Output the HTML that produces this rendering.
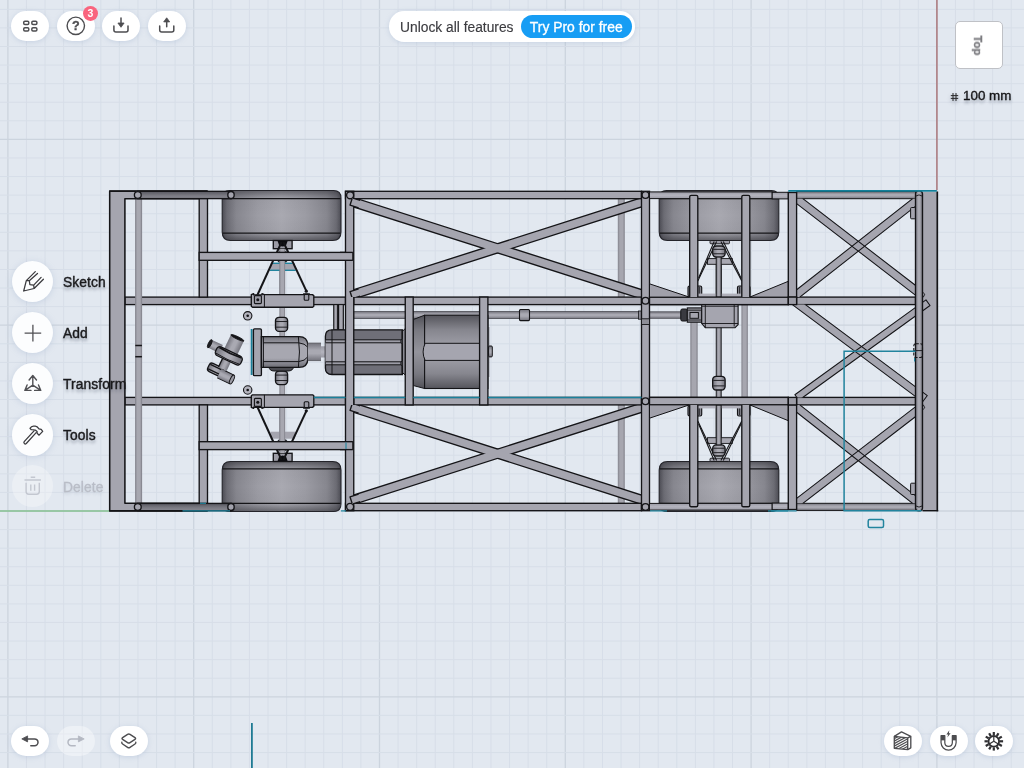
<!DOCTYPE html>
<html><head><meta charset="utf-8"><title>CAD</title>
<style>
html,body{margin:0;padding:0;}
body{width:1024px;height:768px;overflow:hidden;background:#e2e8f0;font-family:"Liberation Sans",sans-serif;}
#app{position:relative;width:1024px;height:768px;overflow:hidden;background:#e2e8f0;}
#grid,#draw{position:absolute;left:0;top:0;}
.gm{stroke:#d7dee8;stroke-width:1;}
.gM{stroke:#ccd4de;stroke-width:1.3;}
.pill{position:absolute;width:38px;height:30px;border-radius:15px;background:#fff;box-shadow:0 1px 5px rgba(150,170,200,0.35);}
.pill.dis{background:rgba(255,255,255,0.38);box-shadow:none;}
.pill svg{will-change:transform;position:absolute;left:0;top:0;}
.circ{position:absolute;width:41.5px;height:41.5px;border-radius:21px;background:#fcfdfe;box-shadow:0 1px 6px rgba(150,170,200,0.35);}
.circ.dis{background:rgba(255,255,255,0.3);box-shadow:none;}
.circ svg{position:absolute;left:0;top:0;}
.lbl{position:absolute;will-change:transform;font-size:13.8px;line-height:16px;color:#1a1a1c;text-shadow:0 2.5px 3px rgba(40,50,70,0.4);-webkit-text-stroke:0.4px #1a1a1c;white-space:nowrap;letter-spacing:0.1px;margin-top:1px;}
.lbl.dis{color:#b9bdc7;-webkit-text-stroke:0.3px #b9bdc7;text-shadow:0 2px 3px rgba(120,130,150,0.25);}
.badge{position:absolute;will-change:transform;left:83.4px;top:5.8px;width:14.8px;height:14.8px;border-radius:7.4px;background:#f9647e;color:#fff;font-weight:bold;font-size:10.5px;line-height:14.8px;text-align:center;}
.banner{position:absolute;left:388.6px;top:11.2px;width:246.2px;height:30.4px;border-radius:15.2px;background:#fff;box-shadow:0 1px 5px rgba(150,170,200,0.35);}
.banner .bt{position:absolute;will-change:transform;left:11.6px;top:9.2px;font-size:13.8px;line-height:16px;color:#3c3c40;white-space:nowrap;-webkit-text-stroke:0.15px #3c3c40;}
.banner .bb{position:absolute;left:132.5px;top:3.7px;width:110.5px;height:23.6px;border-radius:11.8px;background:#179df4;}
.banner .bb span{position:absolute;will-change:transform;left:0;width:100%;top:4px;text-align:center;font-size:13.9px;line-height:16px;color:#fff;white-space:nowrap;-webkit-text-stroke:0.3px #fff;}
.cube{position:absolute;box-sizing:border-box;left:954.6px;top:21.3px;width:48px;height:48.2px;border-radius:5px;background:#fff;border:0.6px solid #bfc1c6;}
.cube span{will-change:transform;position:absolute;left:50%;top:50%;font-size:11.4px;font-weight:bold;color:#7c7c80;-webkit-text-stroke:0.3px #7c7c80;line-height:12px;transform:translate(-50%,-50%) rotate(90deg) translate(0.5px,1px);}
.scale{position:absolute;left:950.6px;top:88px;height:16px;white-space:nowrap;}
.scale svg{position:absolute;left:-0.8px;top:3.6px;filter:drop-shadow(0 2px 2px rgba(40,50,70,0.35));}
.scale span{position:absolute;will-change:transform;left:12.4px;top:0;font-size:13.4px;line-height:16px;color:#161618;-webkit-text-stroke:0.35px #161618;text-shadow:0 2.5px 3px rgba(40,50,70,0.4);}

</style></head>
<body>
<div id="app">
<svg id="grid" width="1024" height="768" viewBox="0 0 1024 768">
<line x1="7.90" y1="0" x2="7.90" y2="768" class="gM"/>
<line x1="26.48" y1="0" x2="26.48" y2="768" class="gm"/>
<line x1="45.06" y1="0" x2="45.06" y2="768" class="gm"/>
<line x1="63.64" y1="0" x2="63.64" y2="768" class="gm"/>
<line x1="82.22" y1="0" x2="82.22" y2="768" class="gm"/>
<line x1="100.80" y1="0" x2="100.80" y2="768" class="gm"/>
<line x1="119.38" y1="0" x2="119.38" y2="768" class="gm"/>
<line x1="137.96" y1="0" x2="137.96" y2="768" class="gm"/>
<line x1="156.54" y1="0" x2="156.54" y2="768" class="gm"/>
<line x1="175.12" y1="0" x2="175.12" y2="768" class="gm"/>
<line x1="193.70" y1="0" x2="193.70" y2="768" class="gM"/>
<line x1="212.28" y1="0" x2="212.28" y2="768" class="gm"/>
<line x1="230.86" y1="0" x2="230.86" y2="768" class="gm"/>
<line x1="249.44" y1="0" x2="249.44" y2="768" class="gm"/>
<line x1="268.02" y1="0" x2="268.02" y2="768" class="gm"/>
<line x1="286.60" y1="0" x2="286.60" y2="768" class="gm"/>
<line x1="305.18" y1="0" x2="305.18" y2="768" class="gm"/>
<line x1="323.76" y1="0" x2="323.76" y2="768" class="gm"/>
<line x1="342.34" y1="0" x2="342.34" y2="768" class="gm"/>
<line x1="360.92" y1="0" x2="360.92" y2="768" class="gm"/>
<line x1="379.50" y1="0" x2="379.50" y2="768" class="gM"/>
<line x1="398.08" y1="0" x2="398.08" y2="768" class="gm"/>
<line x1="416.66" y1="0" x2="416.66" y2="768" class="gm"/>
<line x1="435.24" y1="0" x2="435.24" y2="768" class="gm"/>
<line x1="453.82" y1="0" x2="453.82" y2="768" class="gm"/>
<line x1="472.40" y1="0" x2="472.40" y2="768" class="gm"/>
<line x1="490.98" y1="0" x2="490.98" y2="768" class="gm"/>
<line x1="509.56" y1="0" x2="509.56" y2="768" class="gm"/>
<line x1="528.14" y1="0" x2="528.14" y2="768" class="gm"/>
<line x1="546.72" y1="0" x2="546.72" y2="768" class="gm"/>
<line x1="565.30" y1="0" x2="565.30" y2="768" class="gM"/>
<line x1="583.88" y1="0" x2="583.88" y2="768" class="gm"/>
<line x1="602.46" y1="0" x2="602.46" y2="768" class="gm"/>
<line x1="621.04" y1="0" x2="621.04" y2="768" class="gm"/>
<line x1="639.62" y1="0" x2="639.62" y2="768" class="gm"/>
<line x1="658.20" y1="0" x2="658.20" y2="768" class="gm"/>
<line x1="676.78" y1="0" x2="676.78" y2="768" class="gm"/>
<line x1="695.36" y1="0" x2="695.36" y2="768" class="gm"/>
<line x1="713.94" y1="0" x2="713.94" y2="768" class="gm"/>
<line x1="732.52" y1="0" x2="732.52" y2="768" class="gm"/>
<line x1="751.10" y1="0" x2="751.10" y2="768" class="gM"/>
<line x1="769.68" y1="0" x2="769.68" y2="768" class="gm"/>
<line x1="788.26" y1="0" x2="788.26" y2="768" class="gm"/>
<line x1="806.84" y1="0" x2="806.84" y2="768" class="gm"/>
<line x1="825.42" y1="0" x2="825.42" y2="768" class="gm"/>
<line x1="844.00" y1="0" x2="844.00" y2="768" class="gm"/>
<line x1="862.58" y1="0" x2="862.58" y2="768" class="gm"/>
<line x1="881.16" y1="0" x2="881.16" y2="768" class="gm"/>
<line x1="899.74" y1="0" x2="899.74" y2="768" class="gm"/>
<line x1="918.32" y1="0" x2="918.32" y2="768" class="gm"/>
<line x1="936.90" y1="0" x2="936.90" y2="768" class="gM"/>
<line x1="955.48" y1="0" x2="955.48" y2="768" class="gm"/>
<line x1="974.06" y1="0" x2="974.06" y2="768" class="gm"/>
<line x1="992.64" y1="0" x2="992.64" y2="768" class="gm"/>
<line x1="1011.22" y1="0" x2="1011.22" y2="768" class="gm"/>
<line x1="0" y1="9.34" x2="1024" y2="9.34" class="gm"/>
<line x1="0" y1="27.92" x2="1024" y2="27.92" class="gm"/>
<line x1="0" y1="46.50" x2="1024" y2="46.50" class="gm"/>
<line x1="0" y1="65.08" x2="1024" y2="65.08" class="gm"/>
<line x1="0" y1="83.66" x2="1024" y2="83.66" class="gm"/>
<line x1="0" y1="102.24" x2="1024" y2="102.24" class="gm"/>
<line x1="0" y1="120.82" x2="1024" y2="120.82" class="gm"/>
<line x1="0" y1="139.40" x2="1024" y2="139.40" class="gM"/>
<line x1="0" y1="157.98" x2="1024" y2="157.98" class="gm"/>
<line x1="0" y1="176.56" x2="1024" y2="176.56" class="gm"/>
<line x1="0" y1="195.14" x2="1024" y2="195.14" class="gm"/>
<line x1="0" y1="213.72" x2="1024" y2="213.72" class="gm"/>
<line x1="0" y1="232.30" x2="1024" y2="232.30" class="gm"/>
<line x1="0" y1="250.88" x2="1024" y2="250.88" class="gm"/>
<line x1="0" y1="269.46" x2="1024" y2="269.46" class="gm"/>
<line x1="0" y1="288.04" x2="1024" y2="288.04" class="gm"/>
<line x1="0" y1="306.62" x2="1024" y2="306.62" class="gm"/>
<line x1="0" y1="325.20" x2="1024" y2="325.20" class="gM"/>
<line x1="0" y1="343.78" x2="1024" y2="343.78" class="gm"/>
<line x1="0" y1="362.36" x2="1024" y2="362.36" class="gm"/>
<line x1="0" y1="380.94" x2="1024" y2="380.94" class="gm"/>
<line x1="0" y1="399.52" x2="1024" y2="399.52" class="gm"/>
<line x1="0" y1="418.10" x2="1024" y2="418.10" class="gm"/>
<line x1="0" y1="436.68" x2="1024" y2="436.68" class="gm"/>
<line x1="0" y1="455.26" x2="1024" y2="455.26" class="gm"/>
<line x1="0" y1="473.84" x2="1024" y2="473.84" class="gm"/>
<line x1="0" y1="492.42" x2="1024" y2="492.42" class="gm"/>
<line x1="0" y1="511.00" x2="1024" y2="511.00" class="gM"/>
<line x1="0" y1="529.58" x2="1024" y2="529.58" class="gm"/>
<line x1="0" y1="548.16" x2="1024" y2="548.16" class="gm"/>
<line x1="0" y1="566.74" x2="1024" y2="566.74" class="gm"/>
<line x1="0" y1="585.32" x2="1024" y2="585.32" class="gm"/>
<line x1="0" y1="603.90" x2="1024" y2="603.90" class="gm"/>
<line x1="0" y1="622.48" x2="1024" y2="622.48" class="gm"/>
<line x1="0" y1="641.06" x2="1024" y2="641.06" class="gm"/>
<line x1="0" y1="659.64" x2="1024" y2="659.64" class="gm"/>
<line x1="0" y1="678.22" x2="1024" y2="678.22" class="gm"/>
<line x1="0" y1="696.80" x2="1024" y2="696.80" class="gM"/>
<line x1="0" y1="715.38" x2="1024" y2="715.38" class="gm"/>
<line x1="0" y1="733.96" x2="1024" y2="733.96" class="gm"/>
<line x1="0" y1="752.54" x2="1024" y2="752.54" class="gm"/>
<line x1="936.9" y1="0" x2="936.9" y2="190" stroke="#b08388" stroke-width="1.7"/>
<line x1="0" y1="511.0" x2="110" y2="511.0" stroke="#84c190" stroke-width="1.6"/>
</svg>
<svg id="draw" width="1024" height="768" viewBox="0 0 1024 768">
<defs>
<linearGradient id="gH" x1="0" y1="0" x2="0" y2="1"><stop offset="0" stop-color="#74747d"/><stop offset="0.4" stop-color="#a9a9b2"/><stop offset="0.6" stop-color="#a9a9b2"/><stop offset="1" stop-color="#74747d"/></linearGradient>
<linearGradient id="gV" x1="0" y1="0" x2="1" y2="0"><stop offset="0" stop-color="#74747d"/><stop offset="0.4" stop-color="#a9a9b2"/><stop offset="0.6" stop-color="#a9a9b2"/><stop offset="1" stop-color="#74747d"/></linearGradient>
<linearGradient id="gVs" x1="0" y1="0" x2="1" y2="0"><stop offset="0" stop-color="#7c7c85"/><stop offset="0.28" stop-color="#a7a7b0"/><stop offset="0.72" stop-color="#a7a7b0"/><stop offset="1" stop-color="#7c7c85"/></linearGradient>
<linearGradient id="gHd" x1="0" y1="0" x2="0" y2="1"><stop offset="0" stop-color="#56565e"/><stop offset="0.55" stop-color="#787880"/><stop offset="1" stop-color="#8a8a93"/></linearGradient>
<linearGradient id="gHb" x1="0" y1="0" x2="0" y2="1"><stop offset="0" stop-color="#9a9aa4"/><stop offset="0.5" stop-color="#b4b4be"/><stop offset="1" stop-color="#9a9aa4"/></linearGradient>
<linearGradient id="gVb" x1="0" y1="0" x2="1" y2="0"><stop offset="0" stop-color="#83838c"/><stop offset="0.3" stop-color="#a6a6af"/><stop offset="0.7" stop-color="#a6a6af"/><stop offset="1" stop-color="#83838c"/></linearGradient>
<linearGradient id="gWheel" x1="0" y1="0" x2="1" y2="0"><stop offset="0" stop-color="#4c4c54"/><stop offset="0.04" stop-color="#6c6c74"/><stop offset="0.12" stop-color="#87878f"/><stop offset="0.3" stop-color="#9c9ca4"/><stop offset="0.5" stop-color="#a9a9b1"/><stop offset="0.7" stop-color="#9c9ca4"/><stop offset="0.88" stop-color="#87878f"/><stop offset="0.96" stop-color="#6c6c74"/><stop offset="1" stop-color="#4c4c54"/></linearGradient>
<linearGradient id="gWheelV" x1="0" y1="0" x2="0" y2="1"><stop offset="0" stop-color="#303036" stop-opacity="0.55"/><stop offset="0.16" stop-color="#303036" stop-opacity="0.05"/><stop offset="0.5" stop-color="#303036" stop-opacity="0"/><stop offset="0.84" stop-color="#303036" stop-opacity="0.05"/><stop offset="1" stop-color="#303036" stop-opacity="0.6"/></linearGradient>
<linearGradient id="gEng" x1="0" y1="0" x2="0" y2="1"><stop offset="0" stop-color="#55555c"/><stop offset="0.2" stop-color="#86868e"/><stop offset="0.5" stop-color="#a7a7b0"/><stop offset="0.8" stop-color="#86868e"/><stop offset="1" stop-color="#55555c"/></linearGradient>
<linearGradient id="gDiff" x1="0" y1="0" x2="0" y2="1"><stop offset="0" stop-color="#74747c"/><stop offset="0.3" stop-color="#a7a7b0"/><stop offset="0.7" stop-color="#a7a7b0"/><stop offset="1" stop-color="#6c6c74"/></linearGradient>
</defs>
<rect x="617.8" y="198.7" width="7" height="98.4" fill="url(#gVb)" />
<rect x="617.8" y="404.9" width="7" height="98.4" fill="url(#gVb)" />
<rect x="690.3" y="322" width="7.4" height="75.4" fill="url(#gVb)" />
<rect x="741.4" y="304.6" width="6.5" height="92.8" fill="url(#gVb)" />
<g>
<path d="M229.7 190.5 H333.5 Q341 190.5 341 198 V232 Q341 240.5 332.5 240.5 H230.7 Q222.2 240.5 222.2 232 V198 Q222.2 190.5 229.7 190.5 Z" fill="url(#gWheel)" stroke="none"/>
<path d="M229.7 190.5 H333.5 Q341 190.5 341 198 V232 Q341 240.5 332.5 240.5 H230.7 Q222.2 240.5 222.2 232 V198 Q222.2 190.5 229.7 190.5 Z" fill="url(#gWheelV)" stroke="#24242a" stroke-width="1.1"/>
<line x1="222.7" y1="198.6" x2="340.5" y2="198.6" stroke="#141417" stroke-width="1.1" />
<line x1="222.7" y1="233.1" x2="340.5" y2="233.1" stroke="#141417" stroke-width="1.1" />
</g>
<g transform="matrix(1 0 0 -1 0 702)">
<path d="M229.7 190.5 H333.5 Q341 190.5 341 198 V232 Q341 240.5 332.5 240.5 H230.7 Q222.2 240.5 222.2 232 V198 Q222.2 190.5 229.7 190.5 Z" fill="url(#gWheel)" stroke="none"/>
<path d="M229.7 190.5 H333.5 Q341 190.5 341 198 V232 Q341 240.5 332.5 240.5 H230.7 Q222.2 240.5 222.2 232 V198 Q222.2 190.5 229.7 190.5 Z" fill="url(#gWheelV)" stroke="#24242a" stroke-width="1.1"/>
<line x1="222.7" y1="198.6" x2="340.5" y2="198.6" stroke="#141417" stroke-width="1.1" />
<line x1="222.7" y1="233.1" x2="340.5" y2="233.1" stroke="#141417" stroke-width="1.1" />
</g>
<g>
<path d="M666.7 190.5 H771.3 Q778.8 190.5 778.8 198 V232 Q778.8 240.5 770.3 240.5 H667.7 Q659.2 240.5 659.2 232 V198 Q659.2 190.5 666.7 190.5 Z" fill="url(#gWheel)" stroke="none"/>
<path d="M666.7 190.5 H771.3 Q778.8 190.5 778.8 198 V232 Q778.8 240.5 770.3 240.5 H667.7 Q659.2 240.5 659.2 232 V198 Q659.2 190.5 666.7 190.5 Z" fill="url(#gWheelV)" stroke="#24242a" stroke-width="1.1"/>
<line x1="659.7" y1="198.6" x2="778.3" y2="198.6" stroke="#141417" stroke-width="1.1" />
<line x1="659.7" y1="233.1" x2="778.3" y2="233.1" stroke="#141417" stroke-width="1.1" />
</g>
<g transform="matrix(1 0 0 -1 0 702)">
<path d="M666.7 190.5 H771.3 Q778.8 190.5 778.8 198 V232 Q778.8 240.5 770.3 240.5 H667.7 Q659.2 240.5 659.2 232 V198 Q659.2 190.5 666.7 190.5 Z" fill="url(#gWheel)" stroke="none"/>
<path d="M666.7 190.5 H771.3 Q778.8 190.5 778.8 198 V232 Q778.8 240.5 770.3 240.5 H667.7 Q659.2 240.5 659.2 232 V198 Q659.2 190.5 666.7 190.5 Z" fill="url(#gWheelV)" stroke="#24242a" stroke-width="1.1"/>
<line x1="659.7" y1="198.6" x2="778.3" y2="198.6" stroke="#141417" stroke-width="1.1" />
<line x1="659.7" y1="233.1" x2="778.3" y2="233.1" stroke="#141417" stroke-width="1.1" />
</g>
<rect x="273.3" y="240.5" width="18.8" height="8.2" fill="#9c9ca6" stroke="#141417" stroke-width="1.35" />
<rect x="273.3" y="453.3" width="18.8" height="8.2" fill="#9c9ca6" stroke="#141417" stroke-width="1.35" />
<path d="M277.6 241 H287.6 L286.2 245 Q282.6 248.2 279 245 Z" fill="#0c0c10"/>
<line x1="279.6" y1="248.6" x2="285.8" y2="248.6" stroke="#141417" stroke-width="1.0" />
<line x1="278.6" y1="251.3" x2="286.6" y2="251.3" stroke="#141417" stroke-width="0.9" />
<path d="M276.8 260.3 H288 L286 262.6 H278.8 Z" fill="#1a1a1f"/>
<path d="M277.6 461 H287.6 L286.2 457 Q282.6 453.8 279 457 Z" fill="#0c0c10"/>
<line x1="279.6" y1="453.4" x2="285.8" y2="453.4" stroke="#141417" stroke-width="1.0" />
<line x1="278.6" y1="450.7" x2="286.6" y2="450.7" stroke="#141417" stroke-width="0.9" />
<path d="M276.8 441.7 H288 L286 439.4 H278.8 Z" fill="#1a1a1f"/>
<rect x="279.4" y="248.7" width="5.7" height="204.6" fill="url(#gVs)" />
<rect x="270.5" y="263.3" width="24.5" height="7" fill="#a5a5af" />
<rect x="270.5" y="431.7" width="24.5" height="7" fill="#a5a5af" />
<line x1="272.3" y1="263.3" x2="292.6" y2="263.3" stroke="#22849e" stroke-width="1.4" />
<line x1="269.7" y1="270.3" x2="295.7" y2="270.3" stroke="#22849e" stroke-width="1.4" />
<rect x="279.4" y="260.3" width="5.7" height="36.8" fill="url(#gVs)" />
<rect x="279.4" y="404.9" width="5.7" height="36.8" fill="url(#gVs)" />
<line x1="281.6" y1="242" x2="257.2" y2="295.5" stroke="#141417" stroke-width="2.0" />
<line x1="283.4" y1="242" x2="306.3" y2="290.9" stroke="#141417" stroke-width="2.0" />
<circle cx="306.3" cy="291.2" r="1.6" fill="#141417"/>
<line x1="281.6" y1="460" x2="257.2" y2="406.5" stroke="#141417" stroke-width="2.0" />
<line x1="283.4" y1="460" x2="306.3" y2="411.1" stroke="#141417" stroke-width="2.0" />
<circle cx="306.3" cy="410.8" r="1.6" fill="#141417"/>
<rect x="124.9" y="297.1" width="220.6" height="7.5" fill="#a5a5af" stroke="#141417" stroke-width="1.35" />
<rect x="124.9" y="397.4" width="220.6" height="7.5" fill="#a5a5af" stroke="#141417" stroke-width="1.35" />
<rect x="135.1" y="196" width="7" height="310" fill="url(#gVs)" />
<line x1="135.3" y1="345.5" x2="141.9" y2="345.5" stroke="#141417" stroke-width="1.5" />
<line x1="135.3" y1="356.7" x2="141.9" y2="356.7" stroke="#141417" stroke-width="1.5" />
<polygon points="109.7,191.3 207.5,191.3 207.5,198.7 124.9,198.7 124.9,503.3 207.5,503.3 207.5,510.7 109.7,510.7" fill="#a5a5af" stroke="#141417" stroke-width="1.55" stroke-linejoin="round" />
<rect x="137.8" y="191.3" width="93.2" height="7.3" fill="url(#gHd)" stroke="#141417" stroke-width="1.35" />
<rect x="137.8" y="503.4" width="93.2" height="7.3" fill="url(#gHd)" stroke="#141417" stroke-width="1.35" />
<line x1="109.2" y1="191.1" x2="207.5" y2="191.1" stroke="#141417" stroke-width="1.7" />
<line x1="109.2" y1="510.9" x2="207.5" y2="510.9" stroke="#141417" stroke-width="1.7" />
<circle cx="137.8" cy="195" r="3.4" fill="#a5a5af" stroke="#141417" stroke-width="1.35"/>
<circle cx="137.8" cy="507" r="3.4" fill="#a5a5af" stroke="#141417" stroke-width="1.35"/>
<rect x="199.2" y="198.7" width="8.3" height="98.4" fill="#a5a5af" stroke="#141417" stroke-width="1.35" />
<rect x="199.2" y="404.9" width="8.3" height="98.4" fill="#a5a5af" stroke="#141417" stroke-width="1.35" />
<rect x="199.2" y="252.4" width="153.4" height="7.9" fill="#a5a5af" stroke="#141417" stroke-width="1.35" />
<rect x="199.2" y="441.7" width="153.4" height="7.9" fill="#a5a5af" stroke="#141417" stroke-width="1.35" />
<ellipse cx="231" cy="195" rx="3.2" ry="3.5" fill="#a3a3ad" stroke="#141417" stroke-width="1.35"/>
<ellipse cx="231" cy="507" rx="3.2" ry="3.5" fill="#a3a3ad" stroke="#141417" stroke-width="1.35"/>
<polygon points="251.3,294.6 253.6,293.6 253.6,294.8 262,294.8 262,293.6 264.4,294.6 303.6,294.6 303.6,294 309.4,294 309.4,294.6 312.4,294.6 313.8,295.6 313.8,306.2 312.6,307.2 252.5,307.2 251.3,306.2" fill="#a5a5af" stroke="#141417" stroke-width="1.35" stroke-linejoin="round" />
<rect x="254.4" y="295.6" width="7" height="8" fill="#9a9aa4" stroke="#141417" stroke-width="1.1" rx="1" />
<circle cx="257.8" cy="299.7" r="1.5" fill="#141417"/>
<line x1="264.4" y1="294.6" x2="264.4" y2="307.2" stroke="#141417" stroke-width="1" />
<rect x="304.2" y="294.4" width="4.6" height="5.8" fill="#9a9aa4" stroke="#141417" stroke-width="1.1" rx="1" />
<polygon points="251.3,407.4 253.6,408.4 253.6,407.2 262,407.2 262,408.4 264.4,407.4 303.6,407.4 303.6,408 309.4,408 309.4,407.4 312.4,407.4 313.8,406.4 313.8,395.8 312.6,394.8 252.5,394.8 251.3,395.8" fill="#a5a5af" stroke="#141417" stroke-width="1.35" stroke-linejoin="round" />
<rect x="254.4" y="398.4" width="7" height="8" fill="#9a9aa4" stroke="#141417" stroke-width="1.1" rx="1" />
<circle cx="257.8" cy="402.3" r="1.5" fill="#141417"/>
<line x1="264.4" y1="407.4" x2="264.4" y2="394.8" stroke="#141417" stroke-width="1" />
<rect x="304.2" y="401.8" width="4.6" height="5.8" fill="#9a9aa4" stroke="#141417" stroke-width="1.1" rx="1" />
<circle cx="247.7" cy="315.8" r="4.2" fill="#b4b4be" stroke="#141417" stroke-width="1.1"/>
<circle cx="247.7" cy="315.8" r="1.3" fill="#141417"/>
<circle cx="247.7" cy="390" r="4.2" fill="#b4b4be" stroke="#141417" stroke-width="1.1"/>
<circle cx="247.7" cy="390" r="1.3" fill="#141417"/>
<rect x="275.5" y="317.3" width="12.1" height="14.1" rx="3.5" fill="url(#gV)" stroke="#141417" stroke-width="1.35"/>
<line x1="276.1" y1="321.53" x2="287" y2="321.53" stroke="#141417" stroke-width="0.9" />
<line x1="276.1" y1="327.17" x2="287" y2="327.17" stroke="#141417" stroke-width="0.9" />
<rect x="275.5" y="371" width="12.1" height="13.6" rx="3.5" fill="url(#gV)" stroke="#141417" stroke-width="1.35"/>
<line x1="276.1" y1="375.08" x2="287" y2="375.08" stroke="#141417" stroke-width="0.9" />
<line x1="276.1" y1="380.52" x2="287" y2="380.52" stroke="#141417" stroke-width="0.9" />
<line x1="251.6" y1="329" x2="251.6" y2="375" stroke="#1b819b" stroke-width="1.8" />
<rect x="253.4" y="328.8" width="8" height="46.8" fill="#a5a5af" stroke="#141417" stroke-width="1.35" rx="1.2" />
<path d="M268.7 366.5 H293.7 Q293 371 288 371 H274 Q269.5 371 268.7 366.5 Z" fill="#4a4a50" stroke="#141417" stroke-width="1"/>
<path d="M261.4 336.6 H299 Q307.8 336.6 307.8 345.5 V358.4 Q307.8 367.3 299 367.3 H261.4 Z" fill="url(#gDiff)" stroke="#141417" stroke-width="1.35"/>
<line x1="263.4" y1="336.6" x2="263.4" y2="367.3" stroke="#141417" stroke-width="1" />
<path d="M298.4 336.6 Q300.5 352 298.4 367.3" fill="none" stroke="#141417" stroke-width="1"/>
<path d="M263.4 342.8 H298.6 Q305 343.5 307.6 347" fill="none" stroke="#141417" stroke-width="1"/>
<path d="M263.4 361.6 H298.6 Q305 361 307.6 357" fill="none" stroke="#141417" stroke-width="1"/>
<rect x="307.8" y="343.1" width="13.2" height="17.5" fill="url(#gH)" />
<line x1="307.8" y1="343.1" x2="321" y2="343.1" stroke="#55555c" stroke-width="0.8" />
<line x1="307.8" y1="360.6" x2="321" y2="360.6" stroke="#55555c" stroke-width="0.8" />
<rect x="321" y="346.3" width="5.3" height="11.2" fill="url(#gHb)" />
<rect x="333.7" y="304.6" width="3.9" height="25.2" fill="url(#gV)" stroke="#141417" stroke-width="1" />
<rect x="338.5" y="304.6" width="4.9" height="25.2" fill="url(#gV)" stroke="#141417" stroke-width="1" />
<path d="M331.9 329.8 H402.3 V374.5 H331.9 Q325.4 374.5 325.4 368.0 V336.3 Q325.4 329.8 331.9 329.8 Z" fill="#6f6f78" stroke="#141417" stroke-width="1.35"/>
<path d="M325.4 342.8 H401.3 V361.8 H325.4 Z" fill="#a5a5af" stroke="none"/>
<rect x="325.7" y="339.8" width="75.6" height="3" fill="#9c9ca6" />
<rect x="325.7" y="361.8" width="75.6" height="3" fill="#9c9ca6" />
<line x1="325.7" y1="339.8" x2="401.3" y2="339.8" stroke="#141417" stroke-width="1" />
<line x1="325.7" y1="342.8" x2="401.3" y2="342.8" stroke="#141417" stroke-width="1" />
<line x1="325.7" y1="361.8" x2="401.3" y2="361.8" stroke="#141417" stroke-width="1" />
<line x1="325.7" y1="364.8" x2="401.3" y2="364.8" stroke="#141417" stroke-width="1" />
<path d="M332 329.8 V374.5" fill="none" stroke="#141417" stroke-width="1"/>
<polygon points="402.3,331.5 405.3,328.4 413.2,328.4 413.2,375 405.3,375 402.3,372.5" fill="#8a8a93" stroke="#141417" stroke-width="1" stroke-linejoin="round" />
<path d="M402.3 329.8 V338.5 L400.90000000000003 340 V342.5 L402.3 344 V360.6 L400.90000000000003 362 V364.6 L402.3 366 V374.5" fill="none" stroke="#141417" stroke-width="1"/>
<rect x="353.75" y="311.6" width="165.75" height="7" fill="url(#gH)" stroke="#4a4a52" stroke-width="0.8" />
<rect x="529.5" y="311.6" width="110" height="7" fill="url(#gH)" stroke="#4a4a52" stroke-width="0.8" />
<rect x="519.5" y="309.5" width="10" height="11.1" fill="url(#gH)" stroke="#141417" stroke-width="1.1" rx="1" />
<rect x="638.6" y="311" width="2.9" height="8.2" fill="#8a8a93" stroke="#141417" stroke-width="0.8" />
<rect x="649.5" y="311.8" width="31.3" height="6.5" fill="url(#gH)" stroke="#4a4a52" stroke-width="0.8" />
<path d="M413.2 319.6 L424.6 315.2 V388.5 L413.2 385.5 Z" fill="url(#gEng)" stroke="#141417" stroke-width="1"/>
<path d="M413.2 319.6 L424.6 315.2 V388.5 L413.2 385.5 Z" fill="#3c3c44" fill-opacity="0.18" stroke="none"/>
<rect x="424.6" y="315.2" width="63.3" height="73.3" fill="url(#gEng)" stroke="#141417" stroke-width="1.1" />
<path d="M487.9 343.3 H425.1 Q421.1 352 425.1 360.4 H487.9" fill="#a5a5af" stroke="#141417" stroke-width="1"/>
<rect x="487.9" y="327" width="1.4" height="50" fill="#6c6c74" />
<rect x="488.6" y="346" width="3.7" height="10.9" fill="url(#gH)" stroke="#141417" stroke-width="1" rx="1" />
<g transform="translate(228.8 355.9) rotate(25.5)">
<rect x="-22.6" y="-7.2" width="12.6" height="8.8" fill="url(#gH)" />
<ellipse cx="-22.4" cy="-2.8" rx="1.5" ry="4.5" fill="#1c1c20" stroke="#141417" stroke-width="0.8"/>
<rect x="-7.2" y="-20" width="14.4" height="17" fill="url(#gV)" />
<ellipse cx="0" cy="-20" rx="7.2" ry="1.3" fill="#131316" stroke="#141417" stroke-width="0.8"/>
<rect x="-13.8" y="13.6" width="16" height="9" rx="2.8" fill="url(#gV)" stroke="#141417" stroke-width="1.3"/>
<line x1="-13" y1="15.6" x2="2" y2="15.6" stroke="#141417" stroke-width="1.2" />
<line x1="-13" y1="20.6" x2="2" y2="20.6" stroke="#141417" stroke-width="1.2" />
<rect x="-1" y="15" width="14" height="9.8" fill="url(#gH)" />
<ellipse cx="13" cy="19.9" rx="1.7" ry="4.9" fill="#9a9aa4" stroke="#141417" stroke-width="0.9"/>
<line x1="-1" y1="24.8" x2="13" y2="24.8" stroke="#141417" stroke-width="0.9" />
<line x1="3" y1="15" x2="13" y2="15" stroke="#141417" stroke-width="0.9" />
<rect x="-4.5" y="3.5" width="9" height="11" fill="url(#gV)" />
<line x1="-4.5" y1="4" x2="-4.5" y2="14.5" stroke="#141417" stroke-width="1.4" />
<rect x="-14" y="-4.8" width="28" height="9.6" rx="3.6" fill="url(#gV)" stroke="#141417" stroke-width="1.3"/>
<path d="M-12.6 -3.2 Q0 -1.6 12.6 -3.2 M-12.9 3.0 Q0 4.4 12.9 3.0 M-11.6 -4.0 Q0 -2.8 11.6 -4.0" fill="none" stroke="#141417" stroke-width="0.9"/>
</g>
<clipPath id="cp1"><rect x="353.75" y="198.7" width="287.75" height="98.4"/></clipPath>
<g clip-path="url(#cp1)">
<polygon points="341.18,202.22 651.79,301.53 654.07,294.38 343.46,195.07" fill="#a5a5af" stroke="#141417" stroke-width="2.7" stroke-linejoin="round" />
<polygon points="343.46,301.53 654.07,202.22 651.79,195.07 341.18,294.38" fill="#a5a5af" stroke="#141417" stroke-width="2.7" stroke-linejoin="round" />
<polygon points="341.18,202.22 651.79,301.53 654.07,294.38 343.46,195.07" fill="#a5a5af" stroke="none" />
<polygon points="343.46,301.53 654.07,202.22 651.79,195.07 341.18,294.38" fill="#a5a5af" stroke="none" />
</g>
<clipPath id="cp2"><rect x="353.75" y="404.9" width="287.75" height="98.4"/></clipPath>
<g clip-path="url(#cp2)">
<polygon points="343.46,506.93 654.07,407.62 651.79,400.47 341.18,499.78" fill="#a5a5af" stroke="#141417" stroke-width="2.7" stroke-linejoin="round" />
<polygon points="341.18,407.62 651.79,506.93 654.07,499.78 343.46,400.47" fill="#a5a5af" stroke="#141417" stroke-width="2.7" stroke-linejoin="round" />
<polygon points="343.46,506.93 654.07,407.62 651.79,400.47 341.18,499.78" fill="#a5a5af" stroke="none" />
<polygon points="341.18,407.62 651.79,506.93 654.07,499.78 343.46,400.47" fill="#a5a5af" stroke="none" />
</g>
<rect x="345.5" y="191.3" width="296" height="7.4" fill="#a5a5af" stroke="#141417" stroke-width="1.35" />
<rect x="345.5" y="503.3" width="296" height="7.4" fill="#a5a5af" stroke="#141417" stroke-width="1.35" />
<rect x="353.75" y="297.1" width="287.75" height="7.5" fill="#a5a5af" stroke="#141417" stroke-width="1.35" />
<rect x="353.75" y="397.4" width="287.75" height="7.5" fill="#a5a5af" stroke="#141417" stroke-width="1.35" />
<rect x="649.5" y="297.1" width="138.8" height="7.5" fill="#a5a5af" stroke="#141417" stroke-width="1.35" />
<rect x="649.5" y="397.4" width="138.8" height="7.5" fill="#a5a5af" stroke="#141417" stroke-width="1.35" />
<rect x="796.6" y="297.1" width="118.9" height="7.5" fill="#a5a5af" stroke="#141417" stroke-width="1.35" />
<rect x="796.6" y="397.4" width="118.9" height="7.5" fill="#a5a5af" stroke="#141417" stroke-width="1.35" />
<rect x="405.25" y="297.1" width="7.95" height="107.8" fill="#a5a5af" stroke="#141417" stroke-width="1.35" />
<rect x="479.6" y="297.1" width="8.3" height="107.8" fill="#a5a5af" stroke="#141417" stroke-width="1.35" />
<rect x="345.5" y="191.3" width="8.25" height="319.4" fill="#a5a5af" stroke="#141417" stroke-width="1.35" />
<circle cx="350.1" cy="195.2" r="3.5" fill="#a5a5af" stroke="#141417" stroke-width="1.35"/>
<circle cx="350.1" cy="506.8" r="3.5" fill="#a5a5af" stroke="#141417" stroke-width="1.35"/>
<rect x="340" y="252.4" width="12.9" height="7.9" fill="#a5a5af" />
<line x1="340" y1="252.4" x2="352.9" y2="252.4" stroke="#141417" stroke-width="1.35" />
<line x1="340" y1="260.3" x2="352.9" y2="260.3" stroke="#141417" stroke-width="1.35" />
<line x1="352.9" y1="252.4" x2="352.9" y2="260.3" stroke="#141417" stroke-width="1.35" />
<rect x="340" y="441.7" width="12.9" height="7.9" fill="#a5a5af" />
<line x1="340" y1="449.6" x2="352.9" y2="449.6" stroke="#141417" stroke-width="1.35" />
<line x1="340" y1="441.7" x2="352.9" y2="441.7" stroke="#141417" stroke-width="1.35" />
<line x1="352.9" y1="449.6" x2="352.9" y2="441.7" stroke="#141417" stroke-width="1.35" />
<clipPath id="cpe1"><rect x="348" y="198.9" width="12" height="98"/></clipPath>
<clipPath id="cpe2"><rect x="348" y="405.1" width="12" height="98"/></clipPath>
<g clip-path="url(#cpe1)">
<polygon points="350.06,205.07 358.63,207.81 360.91,200.67 352.34,197.93" fill="#a5a5af" stroke="none" />
<path d="M358.63 207.81 L350.06 205.07 L352.34 197.93 L360.91 200.67" fill="none" stroke="#141417" stroke-width="1.35" stroke-linejoin="round"/>
</g>
<g clip-path="url(#cpe1)">
<polygon points="352.34,298.67 360.91,295.93 358.63,288.79 350.06,291.53" fill="#a5a5af" stroke="none" />
<path d="M360.91 295.93 L352.34 298.67 L350.06 291.53 L358.63 288.79" fill="none" stroke="#141417" stroke-width="1.35" stroke-linejoin="round"/>
</g>
<g clip-path="url(#cpe2)">
<polygon points="352.34,504.07 360.91,501.33 358.63,494.19 350.06,496.93" fill="#a5a5af" stroke="none" />
<path d="M360.91 501.33 L352.34 504.07 L350.06 496.93 L358.63 494.19" fill="none" stroke="#141417" stroke-width="1.35" stroke-linejoin="round"/>
</g>
<g clip-path="url(#cpe2)">
<polygon points="350.06,410.47 358.63,413.21 360.91,406.07 352.34,403.33" fill="#a5a5af" stroke="none" />
<path d="M358.63 413.21 L350.06 410.47 L352.34 403.33 L360.91 406.07" fill="none" stroke="#141417" stroke-width="1.35" stroke-linejoin="round"/>
</g>
<rect x="641.5" y="191.3" width="8" height="319.4" fill="#a5a5af" stroke="#141417" stroke-width="1.35" />
<circle cx="645.5" cy="195" r="3.4" fill="#a5a5af" stroke="#141417" stroke-width="1.35"/>
<circle cx="645.5" cy="507" r="3.4" fill="#a5a5af" stroke="#141417" stroke-width="1.35"/>
<circle cx="645.5" cy="300.8" r="3.4" fill="#a5a5af" stroke="#141417" stroke-width="1.35"/>
<circle cx="645.5" cy="401.2" r="3.4" fill="#a5a5af" stroke="#141417" stroke-width="1.35"/>
<rect x="641.5" y="318.8" width="8" height="5.7" fill="#8e8e97" stroke="#141417" stroke-width="0.9" />
<line x1="313.8" y1="397.5" x2="345.5" y2="397.5" stroke="#1b819b" stroke-width="1.6" />
<line x1="353.75" y1="397.5" x2="405.25" y2="397.5" stroke="#1b819b" stroke-width="1.6" />
<line x1="413.2" y1="397.5" x2="479.6" y2="397.5" stroke="#1b819b" stroke-width="1.6" />
<line x1="487.9" y1="397.5" x2="641.5" y2="397.5" stroke="#1b819b" stroke-width="1.6" />
<rect x="922.5" y="192" width="14.9" height="318.7" fill="#a5a5af" />
<line x1="937.3" y1="191.6" x2="937.3" y2="511.2" stroke="#141417" stroke-width="1.7" />
<line x1="922.5" y1="510.7" x2="938.2" y2="510.7" stroke="#141417" stroke-width="1.4" />
<rect x="716.2" y="256" width="5" height="190" fill="url(#gV)" stroke="#141417" stroke-width="0.9" />
<rect x="710" y="240.5" width="19.5" height="3.3" fill="#9c9ca6" stroke="#141417" stroke-width="0.9" rx="1" />
<rect x="707.5" y="258.6" width="24.8" height="5.7" fill="#a8a8b2" stroke="#141417" stroke-width="0.9" />
<line x1="716.6" y1="241.5" x2="697.8" y2="281" stroke="#141417" stroke-width="1.1" />
<line x1="720.9" y1="241.5" x2="741.8" y2="281" stroke="#141417" stroke-width="1.1" />
<line x1="714.2" y1="241.5" x2="698.6" y2="278" stroke="#141417" stroke-width="1.1" />
<line x1="723.3" y1="241.5" x2="741" y2="278" stroke="#141417" stroke-width="1.1" />
<rect x="688" y="286" width="13.7" height="10.4" fill="#85858e" stroke="#141417" stroke-width="1.15" rx="1.5" />
<rect x="737.5" y="286" width="12.5" height="10.4" fill="#85858e" stroke="#141417" stroke-width="1.15" rx="1.5" />
<line x1="699.3" y1="287" x2="699.3" y2="296" stroke="#141417" stroke-width="0.8" />
<line x1="739.6" y1="287" x2="739.6" y2="296" stroke="#141417" stroke-width="0.8" />
<rect x="697.8" y="293.6" width="44" height="3.5" fill="#b0b0ba" />
<rect x="710" y="458.2" width="19.5" height="3.3" fill="#9c9ca6" stroke="#141417" stroke-width="0.9" rx="1" />
<rect x="707.5" y="437.7" width="24.8" height="5.7" fill="#a8a8b2" stroke="#141417" stroke-width="0.9" />
<line x1="716.6" y1="460.5" x2="697.8" y2="421" stroke="#141417" stroke-width="1.1" />
<line x1="720.9" y1="460.5" x2="741.8" y2="421" stroke="#141417" stroke-width="1.1" />
<line x1="714.2" y1="460.5" x2="698.6" y2="424" stroke="#141417" stroke-width="1.1" />
<line x1="723.3" y1="460.5" x2="741" y2="424" stroke="#141417" stroke-width="1.1" />
<rect x="688" y="405.6" width="13.7" height="10.4" fill="#85858e" stroke="#141417" stroke-width="1.15" rx="1.5" />
<rect x="737.5" y="405.6" width="12.5" height="10.4" fill="#85858e" stroke="#141417" stroke-width="1.15" rx="1.5" />
<line x1="699.3" y1="415" x2="699.3" y2="406" stroke="#141417" stroke-width="0.8" />
<line x1="739.6" y1="415" x2="739.6" y2="406" stroke="#141417" stroke-width="0.8" />
<rect x="697.8" y="404.9" width="44" height="3.5" fill="#b0b0ba" />
<rect x="712.7" y="246" width="12.4" height="11.1" rx="3.5" fill="url(#gV)" stroke="#141417" stroke-width="1.35"/>
<line x1="713.3" y1="249.33" x2="724.5" y2="249.33" stroke="#141417" stroke-width="0.9" />
<line x1="713.3" y1="253.77" x2="724.5" y2="253.77" stroke="#141417" stroke-width="0.9" />
<rect x="712.7" y="444.9" width="12.4" height="11.1" rx="3.5" fill="url(#gV)" stroke="#141417" stroke-width="1.35"/>
<line x1="713.3" y1="448.23" x2="724.5" y2="448.23" stroke="#141417" stroke-width="0.9" />
<line x1="713.3" y1="452.67" x2="724.5" y2="452.67" stroke="#141417" stroke-width="0.9" />
<rect x="712.7" y="376.3" width="12.4" height="13.7" rx="3.5" fill="url(#gV)" stroke="#141417" stroke-width="1.35"/>
<line x1="713.3" y1="380.41" x2="724.5" y2="380.41" stroke="#141417" stroke-width="0.9" />
<line x1="713.3" y1="385.89" x2="724.5" y2="385.89" stroke="#141417" stroke-width="0.9" />
<rect x="716.2" y="257.1" width="5" height="40" fill="url(#gV)" stroke="#141417" stroke-width="0.9" />
<rect x="716.2" y="404.9" width="5" height="40" fill="url(#gV)" stroke="#141417" stroke-width="0.9" />
<rect x="649.5" y="297.1" width="138.8" height="7.5" fill="#a5a5af" stroke="#141417" stroke-width="1.35" />
<rect x="649.5" y="397.4" width="138.8" height="7.5" fill="#a5a5af" stroke="#141417" stroke-width="1.35" />
<polygon points="649.5,283.8 649.5,297.1 689.3,297.1" fill="#a0a0aa" stroke="#141417" stroke-width="1" stroke-linejoin="round" />
<polygon points="649.5,418.2 649.5,404.9 689.3,404.9" fill="#a0a0aa" stroke="#141417" stroke-width="1" stroke-linejoin="round" />
<polygon points="788.3,281.3 788.3,297.1 749.8,297.1" fill="#a0a0aa" stroke="#141417" stroke-width="1" stroke-linejoin="round" />
<polygon points="788.3,420.7 788.3,404.9 749.8,404.9" fill="#a0a0aa" stroke="#141417" stroke-width="1" stroke-linejoin="round" />
<rect x="649.5" y="191.9" width="122.7" height="6.7" fill="url(#gHb)" stroke="#141417" stroke-width="1" />
<rect x="772.2" y="192.3" width="16.1" height="6.6" fill="url(#gHb)" stroke="#141417" stroke-width="1" />
<rect x="796.6" y="191.6" width="119.4" height="7.1" fill="url(#gH)" stroke="#141417" stroke-width="1" />
<rect x="649.5" y="503.4" width="122.7" height="6.7" fill="url(#gHb)" stroke="#141417" stroke-width="1" />
<rect x="772.2" y="503.1" width="16.1" height="6.6" fill="url(#gHb)" stroke="#141417" stroke-width="1" />
<rect x="796.6" y="503.3" width="119.4" height="7.1" fill="url(#gH)" stroke="#141417" stroke-width="1" />
<path d="M689.7 297.1 V196.8 Q689.7 195.3 691.2 195.3 H696.3 Q697.8 195.3 697.8 196.8 V297.1" fill="#a5a5af" stroke="#141417" stroke-width="1.35"/>
<path d="M741.8 297.1 V196.8 Q741.8 195.3 743.3 195.3 H748.3 Q749.8 195.3 749.8 196.8 V297.1" fill="#a5a5af" stroke="#141417" stroke-width="1.35"/>
<path d="M689.7 404.9 V505.2 Q689.7 506.7 691.2 506.7 H696.3 Q697.8 506.7 697.8 505.2 V404.9" fill="#a5a5af" stroke="#141417" stroke-width="1.35"/>
<path d="M741.8 404.9 V505.2 Q741.8 506.7 743.3 506.7 H748.3 Q749.8 506.7 749.8 505.2 V404.9" fill="#a5a5af" stroke="#141417" stroke-width="1.35"/>
<clipPath id="cp3"><rect x="796.6" y="198.7" width="118.9" height="98.4"/></clipPath>
<g clip-path="url(#cp3)">
<polygon points="784.71,194.47 922.63,300.71 927.39,294.53 789.47,188.29" fill="#a5a5af" stroke="none" />
<polygon points="789.57,305.18 927.35,196.95 922.53,190.82 784.75,299.05" fill="#a5a5af" stroke="none" />
<polygon points="784.71,194.47 922.63,300.71 927.39,294.53 789.47,188.29" fill="none" stroke="#141417" stroke-width="1.05" stroke-linejoin="round" />
<polygon points="789.57,305.18 927.35,196.95 922.53,190.82 784.75,299.05" fill="none" stroke="#141417" stroke-width="1.05" stroke-linejoin="round" />
</g>
<clipPath id="cp4"><rect x="796.6" y="404.9" width="118.9" height="98.4"/></clipPath>
<g clip-path="url(#cp4)">
<polygon points="789.47,513.71 927.39,407.47 922.63,401.29 784.71,507.53" fill="#a5a5af" stroke="none" />
<polygon points="784.75,402.95 922.53,511.18 927.35,505.05 789.57,396.82" fill="#a5a5af" stroke="none" />
<polygon points="789.47,513.71 927.39,407.47 922.63,401.29 784.71,507.53" fill="none" stroke="#141417" stroke-width="1.05" stroke-linejoin="round" />
<polygon points="784.75,402.95 922.53,511.18 927.35,505.05 789.57,396.82" fill="none" stroke="#141417" stroke-width="1.05" stroke-linejoin="round" />
</g>
<clipPath id="cpm"><rect x="790" y="304.6" width="126" height="92.8"/><rect x="915" y="296" width="20" height="110"/></clipPath>
<g clip-path="url(#cpm)">
<polygon points="786.67,300.36 922.67,401.81 927.33,395.56 791.33,294.1" fill="#a5a5af" stroke="none" />
<polygon points="925.98,299.86 794.88,394.7 798.92,400.3 930.02,305.46" fill="#a5a5af" stroke="none" />
<polygon points="786.67,300.36 922.67,401.81 927.33,395.56 791.33,294.1" fill="none" stroke="#141417" stroke-width="1.05" stroke-linejoin="round" />
<polygon points="925.98,299.86 794.88,394.7 798.92,400.3 930.02,305.46" fill="none" stroke="#141417" stroke-width="1.05" stroke-linejoin="round" />
</g>
<rect x="788.3" y="192.5" width="8.3" height="104.6" fill="#a5a5af" stroke="#141417" stroke-width="1.35" />
<rect x="788.3" y="404.9" width="8.3" height="104.6" fill="#a5a5af" stroke="#141417" stroke-width="1.35" />
<rect x="788.3" y="297.1" width="8.3" height="7.5" fill="#9c9ca6" stroke="#141417" stroke-width="1.35" />
<rect x="788.3" y="397.4" width="8.3" height="7.5" fill="#9c9ca6" stroke="#141417" stroke-width="1.35" />
<rect x="680.8" y="309" width="6.5" height="12" fill="#3a3a40" stroke="#141417" stroke-width="1" rx="1.5" />
<rect x="687.3" y="307.9" width="14.4" height="14.3" fill="#8e8e97" stroke="#141417" stroke-width="1.1" />
<rect x="690" y="312.5" width="8.4" height="5.8" fill="#a5a5af" stroke="#141417" stroke-width="1" />
<line x1="687.3" y1="310.2" x2="701.7" y2="310.2" stroke="#141417" stroke-width="0.8" />
<line x1="687.3" y1="320" x2="701.7" y2="320" stroke="#141417" stroke-width="0.8" />
<polygon points="701.7,304.6 738.1,304.6 738.1,324.7 735.1,327.7 705.3,327.7 701.7,323.5" fill="#a5a5af" stroke="#141417" stroke-width="1.15" stroke-linejoin="round" />
<line x1="705.3" y1="304.6" x2="705.3" y2="327.7" stroke="#141417" stroke-width="0.9" />
<line x1="734.2" y1="304.6" x2="734.2" y2="326.5" stroke="#141417" stroke-width="0.9" />
<line x1="701.7" y1="323.5" x2="738.1" y2="323.5" stroke="#141417" stroke-width="0.9" />
<line x1="701.7" y1="306.3" x2="738.1" y2="306.3" stroke="#141417" stroke-width="0.8" />
<polygon points="922.3,291.8 924.8,294.2 923.4,297 922.3,297" fill="#a8a8b2" stroke="#141417" stroke-width="0.9" stroke-linejoin="round" />
<polygon points="922.3,410.2 924.8,407.8 923.4,405 922.3,405" fill="#a8a8b2" stroke="#141417" stroke-width="0.9" stroke-linejoin="round" />
<rect x="910.6" y="207.5" width="4.9" height="11.3" fill="#a5a5af" stroke="#141417" stroke-width="1" rx="1" />
<rect x="910.6" y="483.2" width="4.9" height="11.3" fill="#a5a5af" stroke="#141417" stroke-width="1" rx="1" />
<rect x="915.5" y="190.9" width="7" height="320" rx="3.2" fill="url(#gV)" stroke="#141417" stroke-width="1.35"/>
<path d="M915.5 196.2 Q919 193.6 922.5 196.2" fill="none" stroke="#141417" stroke-width="0.9"/>
<path d="M915.5 505.8 Q919 508.4 922.5 505.8" fill="none" stroke="#141417" stroke-width="0.9"/>
<rect x="913.8" y="343.8" width="8.7" height="13.7" fill="none" stroke="#141417" stroke-width="1.1" rx="2" stroke-dasharray="3 1.6"/>
<line x1="913.8" y1="350.6" x2="922.5" y2="350.6" stroke="#141417" stroke-width="0.9" />
<line x1="788.3" y1="190.9" x2="936.8" y2="190.9" stroke="#13809a" stroke-width="1.8" />
<path d="M915.5 351.2 H844.1 V510.8 H921.5" fill="none" stroke="#22849e" stroke-width="1.5"/>
<line x1="914.6" y1="358" x2="914.6" y2="361.5" stroke="#1f86a0" stroke-width="1.1" />
<rect x="868.2" y="519.6" width="15.3" height="7.8" rx="1.5" fill="none" stroke="#22849e" stroke-width="1.5"/>
<line x1="182.5" y1="510.9" x2="230" y2="510.9" stroke="#1f86a0" stroke-width="1.2" />
<line x1="341" y1="510.9" x2="346" y2="510.9" stroke="#1f86a0" stroke-width="1.2" />
<line x1="650" y1="510.9" x2="667" y2="510.9" stroke="#1f86a0" stroke-width="1.2" />
<line x1="771" y1="510.9" x2="788" y2="510.9" stroke="#1f86a0" stroke-width="1.2" />
<line x1="200" y1="503.3" x2="206" y2="503.3" stroke="#1f86a0" stroke-width="1.1" />
<line x1="346" y1="442.5" x2="346" y2="449" stroke="#1f86a0" stroke-width="1.1" />
<line x1="768" y1="510.9" x2="796.6" y2="510.9" stroke="#1f86a0" stroke-width="1.2" />
<line x1="251.9" y1="723" x2="251.9" y2="768" stroke="#1f7a93" stroke-width="1.8" />
</svg>
<div class="pill" style="left:11.1px;top:11.4px;"><svg width="38" height="30" viewBox="0 0 38 30"><rect x="12.7" y="10.2" width="5.1" height="3.2" rx="1.2" fill="none" stroke="#4d4d50" stroke-width="1.45"/><rect x="12.7" y="16.7" width="5.1" height="3.2" rx="1.2" fill="none" stroke="#4d4d50" stroke-width="1.45"/><rect x="20.8" y="10.2" width="5.1" height="3.2" rx="1.2" fill="none" stroke="#4d4d50" stroke-width="1.45"/><rect x="20.8" y="16.7" width="5.1" height="3.2" rx="1.2" fill="none" stroke="#4d4d50" stroke-width="1.45"/></svg></div>
<div class="pill" style="left:57px;top:11.4px;"><svg width="38" height="30" viewBox="0 0 38 30"><circle cx="18.8" cy="14.8" r="8.7" fill="none" stroke="#4d4d50" stroke-width="1.4"/><text x="18.8" y="19.4" font-family="Liberation Sans, sans-serif" font-weight="bold" font-size="12.6" text-anchor="middle" fill="#4d4d50" stroke="#4d4d50" stroke-width="0.3">?</text></svg></div>
<div class="pill" style="left:102.4px;top:11.4px;"><svg width="38" height="30" viewBox="0 0 38 30"><path d="M11.9 14.9 V19.1 Q11.9 21.1 13.9 21.1 H24 Q26 21.1 26 19.1 V14.9" fill="none" stroke="#4d4d50" stroke-width="1.5" stroke-linecap="round"/><line x1="19" y1="6.9" x2="19" y2="13" stroke="#4d4d50" stroke-width="1.5" stroke-linecap="round"/><path d="M15.9 12 H22.1 L19 16.3 Z" fill="#4d4d50" stroke="#4d4d50" stroke-width="0.8" stroke-linejoin="round"/></svg></div>
<div class="pill" style="left:148.1px;top:11.4px;"><svg width="38" height="30" viewBox="0 0 38 30"><path d="M11.7 14.9 V19.1 Q11.7 21.1 13.7 21.1 H23.8 Q25.8 21.1 25.8 19.1 V14.9" fill="none" stroke="#4d4d50" stroke-width="1.5" stroke-linecap="round"/><line x1="18.7" y1="10" x2="18.7" y2="15.7" stroke="#4d4d50" stroke-width="1.5" stroke-linecap="round"/><path d="M15.7 10.9 H21.7 L18.7 6.8 Z" fill="#4d4d50" stroke="#4d4d50" stroke-width="0.8" stroke-linejoin="round"/></svg></div>
<div class="badge">3</div>
<div class="banner"><span class="bt">Unlock all features</span><span class="bb"><span>Try Pro for free</span></span></div>
<div class="cube"><span>Top</span></div>
<div class="scale"><svg width="9" height="10" viewBox="0 0 9 10"><path d="M3 1 V9 M6 1 V9 M0.8 3.6 H8.2 M0.8 6.4 H8.2" stroke="#2a2a2c" stroke-width="1" fill="none"/></svg><span>100 mm</span></div>
<div class="circ" style="left:11.5px;top:260.5px"><svg width="42" height="42" viewBox="0 0 42 42"><path d="M11.7 30 L14.3 19.6 L23.3 10.6 M11.7 30 L22.1 27.5 L31.4 18.2 M14.3 19.6 L17.3 19.7 L17.9 23.6 L21.7 24.1 L22.1 27.5 M17.3 19.7 L25.5 12.5 M21.7 24.1 L29.1 16.4" fill="none" stroke="#3a3a3e" stroke-width="1.25" stroke-linecap="round" stroke-linejoin="round"/></svg></div>
<div class="lbl" style="left:63px;top:273.7px">Sketch</div>
<div class="circ" style="left:11.5px;top:311.7px"><svg width="42" height="42" viewBox="0 0 42 42"><path d="M12.6 21.1 H29.2 M20.9 12.8 V29.4" stroke="#505054" stroke-width="1.3" fill="none"/></svg></div>
<div class="lbl" style="left:63px;top:324.9px">Add</div>
<div class="circ" style="left:11.5px;top:362.9px"><svg width="42" height="42" viewBox="0 0 42 42"><path d="M20.8 22.2 V12.6 M17.1 17 L20.8 12.5 L24.5 17 M20.8 22.2 L12.9 27.3 M15.1 21.9 L12.8 27.4 L19 27.4 M20.8 22.2 L28.7 27.3 M26.5 21.9 L28.8 27.4 L22.6 27.4" fill="none" stroke="#505054" stroke-width="1.4" stroke-linecap="round" stroke-linejoin="round"/></svg></div>
<div class="lbl" style="left:63px;top:376.09999999999997px">Transform</div>
<div class="circ" style="left:11.5px;top:414.1px"><svg width="42" height="42" viewBox="0 0 42 42"><path d="M18 14.4 Q19.3 12 21.5 12 H23.3 Q25.2 12 27 14.9 L29.2 15.3 L30.7 17.3 L27.1 21.2 L25.1 19.3 V17.6 L23.2 16 L19.3 15.7 Z" fill="none" stroke="#3a3a3e" stroke-width="1.25" stroke-linejoin="round"/><path d="M22.5 16.3 L12.2 27.6 Q11.4 28.8 12.4 29.6 Q13.3 30.4 14.3 29.5 L24.6 18.2" fill="none" stroke="#3a3a3e" stroke-width="1.25" stroke-linejoin="round"/></svg></div>
<div class="lbl" style="left:63px;top:427.3px">Tools</div>
<div class="circ dis" style="left:11.5px;top:465.4px"><svg width="42" height="42" viewBox="0 0 42 42"><path d="M18.7 12.2 H23.2 M12.5 15 H28.9" stroke="#c3c7d0" stroke-width="1.5" fill="none"/><path d="M14.1 17.7 V26.6 Q14.1 29.3 16.8 29.3 H24.6 Q27.3 29.3 27.3 26.6 V17.7" stroke="#c3c7d0" stroke-width="1.4" fill="none"/><path d="M18.8 19.6 V25.7 M22.6 19.6 V25.7" stroke="#c3c7d0" stroke-width="1.4" fill="none"/></svg></div>
<div class="lbl dis" style="left:63px;top:478.59999999999997px">Delete</div>
<div class="pill" style="left:11.1px;top:726.2px;"><svg width="38" height="30" viewBox="0 0 38 30"><path d="M10.8 12.9 L16.6 9.9 V15.9 Z" fill="#4d4d50" stroke="#4d4d50" stroke-width="0.8" stroke-linejoin="round"/><path d="M16.4 12.9 H23.6 A3.4 3.4 0 0 1 23.6 19.7 H19.8" fill="none" stroke="#4d4d50" stroke-width="1.5" stroke-linecap="round"/></svg></div>
<div class="pill dis" style="left:57px;top:726.2px;"><svg width="38" height="30" viewBox="0 0 38 30"><path d="M27.2 12.9 L21.4 9.9 V15.9 Z" fill="#b4b8c2" stroke="#b4b8c2" stroke-width="0.8" stroke-linejoin="round"/><path d="M21.6 12.9 H14.4 A3.4 3.4 0 0 0 14.4 19.7 H18.2" fill="none" stroke="#b4b8c2" stroke-width="1.5" stroke-linecap="round"/></svg></div>
<div class="pill" style="left:110px;top:726.2px;"><svg width="38" height="30" viewBox="0 0 38 30"><path d="M12.6 11.7 L17.6 8.4 Q18.8 7.6 20 8.4 L25 11.7 Q26.2 12.5 25 13.3 L20 16.6 Q18.8 17.4 17.6 16.6 L12.6 13.3 Q11.4 12.5 12.6 11.7 Z" fill="none" stroke="#4d4d50" stroke-width="1.4" stroke-linejoin="round"/><path d="M11.8 16.3 Q11.6 17.3 12.6 18 L17.6 21.4 Q18.8 22.2 20 21.4 L25 18 Q26 17.3 25.8 16.3" fill="none" stroke="#4d4d50" stroke-width="1.4" stroke-linecap="round" stroke-linejoin="round"/></svg></div>
<div class="pill" style="left:884px;top:726.3px;"><svg width="38" height="30" viewBox="0 0 38 30"><defs><clipPath id="hc"><path d="M10.3 10.3 L23.7 11.9 V23.6 L10.3 22.3 Z"/></clipPath></defs><g clip-path="url(#hc)"><line x1="9" y1="5.83" x2="25" y2="-2.98" stroke="#4d4d50" stroke-width="1.15"/><line x1="9" y1="8.32" x2="25" y2="-0.48" stroke="#4d4d50" stroke-width="1.15"/><line x1="9" y1="10.82" x2="25" y2="2.02" stroke="#4d4d50" stroke-width="1.15"/><line x1="9" y1="13.32" x2="25" y2="4.52" stroke="#4d4d50" stroke-width="1.15"/><line x1="9" y1="15.82" x2="25" y2="7.02" stroke="#4d4d50" stroke-width="1.15"/><line x1="9" y1="18.32" x2="25" y2="9.52" stroke="#4d4d50" stroke-width="1.15"/><line x1="9" y1="20.82" x2="25" y2="12.02" stroke="#4d4d50" stroke-width="1.15"/><line x1="9" y1="23.32" x2="25" y2="14.52" stroke="#4d4d50" stroke-width="1.15"/><line x1="9" y1="25.82" x2="25" y2="17.02" stroke="#4d4d50" stroke-width="1.15"/><line x1="9" y1="28.32" x2="25" y2="19.52" stroke="#4d4d50" stroke-width="1.15"/><line x1="9" y1="30.82" x2="25" y2="22.02" stroke="#4d4d50" stroke-width="1.15"/><line x1="9" y1="33.33" x2="25" y2="24.52" stroke="#4d4d50" stroke-width="1.15"/><line x1="9" y1="35.83" x2="25" y2="27.02" stroke="#4d4d50" stroke-width="1.15"/><line x1="9" y1="38.33" x2="25" y2="29.52" stroke="#4d4d50" stroke-width="1.15"/></g><path d="M10.3 10.3 L23.7 11.9 V23.6 L10.3 22.3 Z" fill="none" stroke="#4d4d50" stroke-width="1.35" stroke-linejoin="round"/><path d="M10.3 10.3 L17.5 5.9 L26.8 10.3 L23.7 11.9 M26.8 10.3 V21.8 L23.7 23.6" fill="none" stroke="#4d4d50" stroke-width="1.35" stroke-linejoin="round"/></svg></div>
<div class="pill" style="left:929.8px;top:726.3px;"><svg width="38" height="30" viewBox="0 0 38 30"><path d="M11.05 9.66 V16.8 A7.53 7.53 0 0 0 26.1 16.8 V9.66 H22.34 V16.8 A3.77 3.77 0 0 1 14.81 16.8 V9.66 Z" fill="#fff" stroke="#4d4d50" stroke-width="1.25" stroke-linejoin="round"/><rect x="11.05" y="9.66" width="3.76" height="4.7" fill="#4d4d50"/><rect x="22.34" y="9.66" width="3.76" height="4.7" fill="#4d4d50"/><path d="M19.3 4.3 L16.4 8.4 H18.2 L17.3 11.4 L20.6 7.2 H18.9 Z" fill="#4d4d50"/></svg></div>
<div class="pill" style="left:974.7px;top:726.2px;"><svg width="38" height="30" viewBox="0 0 38 30"><line x1="24.80" y1="15.30" x2="28.10" y2="15.30" stroke="#303033" stroke-width="2.2"/><line x1="24.00" y1="18.30" x2="26.85" y2="19.95" stroke="#303033" stroke-width="2.2"/><line x1="21.80" y1="20.50" x2="23.45" y2="23.35" stroke="#303033" stroke-width="2.2"/><line x1="18.80" y1="21.30" x2="18.80" y2="24.60" stroke="#303033" stroke-width="2.2"/><line x1="15.80" y1="20.50" x2="14.15" y2="23.35" stroke="#303033" stroke-width="2.2"/><line x1="13.60" y1="18.30" x2="10.75" y2="19.95" stroke="#303033" stroke-width="2.2"/><line x1="12.80" y1="15.30" x2="9.50" y2="15.30" stroke="#303033" stroke-width="2.2"/><line x1="13.60" y1="12.30" x2="10.75" y2="10.65" stroke="#303033" stroke-width="2.2"/><line x1="15.80" y1="10.10" x2="14.15" y2="7.25" stroke="#303033" stroke-width="2.2"/><line x1="18.80" y1="9.30" x2="18.80" y2="6.00" stroke="#303033" stroke-width="2.2"/><line x1="21.80" y1="10.10" x2="23.45" y2="7.25" stroke="#303033" stroke-width="2.2"/><line x1="24.00" y1="12.30" x2="26.85" y2="10.65" stroke="#303033" stroke-width="2.2"/><circle cx="18.8" cy="15.3" r="5.3" fill="#fff" stroke="#303033" stroke-width="1.9"/><line x1="18.8" y1="15.3" x2="18.80" y2="10.10" stroke="#303033" stroke-width="1.2"/><line x1="18.8" y1="15.3" x2="23.30" y2="17.90" stroke="#303033" stroke-width="1.2"/><line x1="18.8" y1="15.3" x2="14.30" y2="17.90" stroke="#303033" stroke-width="1.2"/></svg></div>
</div>
</body></html>
